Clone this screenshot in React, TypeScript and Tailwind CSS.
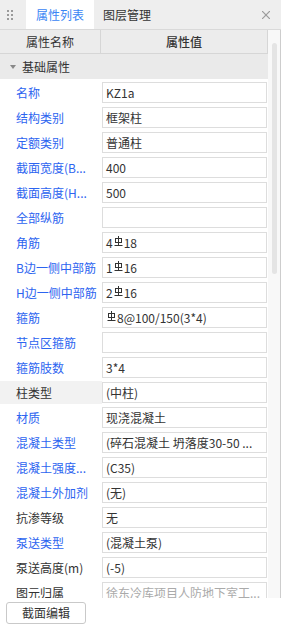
import React from "react";

type Row = { label: string; value: React.ReactNode; black?: boolean; selected?: boolean; muted?: boolean };

// HRB400 steel grade symbol
function Steel() {
  return (
    <svg width="9" height="11" viewBox="0 0 9 11" className="inline-block mx-[1px] -mt-[3px]" fill="none" stroke="#333" strokeWidth="1">
      <line x1="4.5" y1="0" x2="4.5" y2="9" />
      <rect x="1.5" y="2.5" width="6" height="4" />
      <line x1="0.5" y1="9.5" x2="8.5" y2="9.5" />
    </svg>
  );
}

const rows: Row[] = [
  { label: "名称", value: "KZ1a" },
  { label: "结构类别", value: "框架柱" },
  { label: "定额类别", value: "普通柱" },
  { label: "截面宽度(B...", value: "400" },
  { label: "截面高度(H...", value: "500" },
  { label: "全部纵筋", value: "" },
  { label: "角筋", value: <>4<Steel />18</> },
  { label: "B边一侧中部筋", value: <>1<Steel />16</> },
  { label: "H边一侧中部筋", value: <>2<Steel />16</> },
  { label: "箍筋", value: <><Steel />8@100/150(3*4)</> },
  { label: "节点区箍筋", value: "" },
  { label: "箍筋肢数", value: "3*4" },
  { label: "柱类型", value: "(中柱)", black: true, selected: true },
  { label: "材质", value: "现浇混凝土" },
  { label: "混凝土类型", value: "(碎石混凝土 坍落度30-50 ..." },
  { label: "混凝土强度...", value: "(C35)" },
  { label: "混凝土外加剂", value: "(无)" },
  { label: "抗渗等级", value: "无", black: true },
  { label: "泵送类型", value: "(混凝土泵)" },
  { label: "泵送高度(m)", value: "(-5)", black: true },
  { label: "图元归属", value: "徐东冷库项目人防地下室工...", black: true, muted: true },
];

function Grip() {
  return (
    <div className="grid grid-cols-2 gap-x-[2px] gap-y-[2px] ml-[7px] mr-[13px]">
      {Array.from({ length: 6 }).map((_, k) => (
        <span key={k} className="w-[2px] h-[2px] bg-[#9a9a9a]" />
      ))}
    </div>
  );
}

export default function App() {
  return (
    <div
      className="w-[281px] h-[629px] bg-white flex flex-col overflow-hidden text-[12px] text-[#333]"
      style={{ fontFamily: '"Noto Sans CJK SC", "Noto Sans", sans-serif' }}
    >
      {/* tab strip */}
      <div className="h-[30px] shrink-0 bg-[#eeeeee] border-b border-[#d9d9d9] flex items-stretch">
        <div className="flex items-center">
          <Grip />
        </div>
        <div className="w-[68px] bg-white flex items-center justify-center text-[#3a86f5]">属性列表</div>
        <div className="ml-[9px] flex items-center text-[#333]">图层管理</div>
        <div className="flex-1" />
        <div className="flex items-center mr-[11px]">
          <svg width="8" height="8" viewBox="0 0 8 8" stroke="#9b9b9b" strokeWidth="1.2">
            <line x1="0" y1="0" x2="8" y2="8" />
            <line x1="8" y1="0" x2="0" y2="8" />
          </svg>
        </div>
      </div>

      {/* property grid */}
      <div className="h-[568px] shrink-0 flex overflow-hidden border-r border-[#cdcdcd]">
        <div className="w-[268px] shrink-0 flex flex-col overflow-hidden">
          <div className="h-[24px] shrink-0 grid grid-cols-[101px_1fr] bg-[#ececec] border-b border-r border-[#d6d6d6]">
            <div className="flex items-center justify-center border-r border-[#d6d6d6]">属性名称</div>
            <div className="flex items-center justify-center font-medium">属性值</div>
          </div>
          <div className="h-[25px] shrink-0 bg-[#eaeaea] flex items-center">
            <span className="ml-[10px] mr-[6px] w-0 h-0 border-x-[3px] border-x-transparent border-t-[4px] border-t-[#888]" />
            <span>基础属性</span>
          </div>
          {rows.map((r) => (
            <div key={r.label} className="h-[25px] shrink-0 grid grid-cols-[102px_1fr] pr-[1px]">
              <div
                className={
                  "mt-[2px] h-[23px] pl-[16px] flex items-center whitespace-nowrap overflow-hidden " +
                  (r.selected ? "bg-[#f2f2f2] " : "") +
                  (r.black ? "text-[#333]" : "text-[#2c64f0]")
                }
              >
                {r.label}
              </div>
              <div
                className={
                  "mt-[3px] h-[21px] border border-[#dddddd] bg-white pl-[3px] flex items-center whitespace-nowrap overflow-hidden " +
                  (r.muted ? "text-[#aaaaaa]" : "text-[#333]")
                }
              >
                {r.value}
              </div>
            </div>
          ))}
        </div>
        <div className="flex-1 bg-[#f8f8f8] pt-[13px] pl-[4px]">
          <div className="w-[5px] h-[231px] rounded-full bg-[#e4e4e4]" />
        </div>
      </div>

      {/* footer */}
      <div className="flex-1 bg-white pl-[6px] pt-[4px]">
        <button className="w-[80px] h-[22px] rounded-[3px] border border-[#c9c9c9] bg-white text-[12px] text-[#333] flex items-center justify-center">
          截面编辑
        </button>
      </div>
    </div>
  );
}
